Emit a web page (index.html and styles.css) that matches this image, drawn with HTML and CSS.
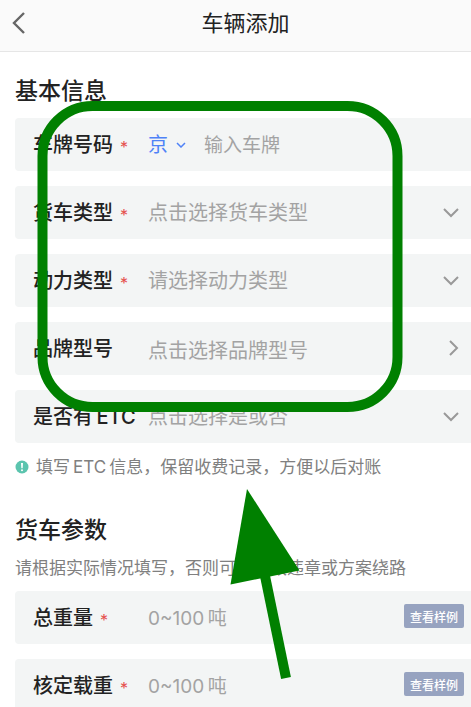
FILE: index.html
```html
<!DOCTYPE html>
<html lang="zh-CN">
<head>
  <meta charset="UTF-8">
  <title>车辆添加</title>
  <meta name="viewport" content="width=device-width, initial-scale=1.0">
  <link rel="stylesheet" href="styles.css">
</head>
<body>
  <header class="navbar">
    <button type="button" class="back" aria-label="返回">
      <svg width="14" height="24" viewBox="0 0 14 24"><path d="M12 2 L2 12 L12 22"/></svg>
    </button>
    <h1>车辆添加</h1>
  </header>

  <form class="content">
    <section>
      <h2>基本信息</h2>
      <div class="rows">
        <div class="row">
          <label for="plate">车牌号码<span class="required">*</span></label>
          <div class="province">
            <select id="province" aria-label="省份">
              <option>京</option>
            </select>
            <svg width="10" height="6" viewBox="0 0 10 6"><path d="M1 1 L5 5 L9 1"/></svg>
          </div>
          <input type="text" id="plate" placeholder="输入车牌">
        </div>
        <div class="row">
          <label for="truck-type">货车类型<span class="required">*</span></label>
          <select id="truck-type">
            <option value="">点击选择货车类型</option>
          </select>
          <svg class="arrow" width="16" height="16" viewBox="0 0 16 16"><path d="M1 5 L8 12 L15 5"/></svg>
        </div>
        <div class="row">
          <label for="power-type">动力类型<span class="required">*</span></label>
          <select id="power-type">
            <option value="">请选择动力类型</option>
          </select>
          <svg class="arrow" width="16" height="16" viewBox="0 0 16 16"><path d="M1 5 L8 12 L15 5"/></svg>
        </div>
        <div class="row">
          <label for="model">品牌型号</label>
          <button type="button" class="picker" id="model">点击选择品牌型号</button>
          <svg class="arrow" width="16" height="16" viewBox="0 0 16 16"><path d="M7 1 L14 8 L7 15"/></svg>
        </div>
        <div class="row">
          <label for="etc">是否有&thinsp;ETC</label>
          <select id="etc">
            <option value="">点击选择是或否</option>
          </select>
          <svg class="arrow" width="16" height="16" viewBox="0 0 16 16"><path d="M1 5 L8 12 L15 5"/></svg>
        </div>
      </div>
      <p class="tip">
        <svg width="14" height="14" viewBox="0 0 14 14">
          <circle cx="7" cy="7" r="6.5" fill="#5bc4ae"/>
          <path d="M6 3 H8 L7.7 8.2 H6.3 Z" fill="#fff"/>
          <circle cx="7" cy="10.2" r="1" fill="#fff"/>
        </svg>
        填写&thinsp;ETC&thinsp;信息，保留收费记录，方便以后对账
      </p>
    </section>

    <section>
      <h2>货车参数</h2>
      <p class="desc">请根据实际情况填写，否则可能导致违章或方案绕路</p>
      <div class="rows">
        <div class="row">
          <label for="total-weight">总重量<span class="required">*</span></label>
          <input type="text" id="total-weight" placeholder="0~100&thinsp;吨">
          <button type="button" class="sample">查看样例</button>
        </div>
        <div class="row">
          <label for="load-weight">核定载重<span class="required">*</span></label>
          <input type="text" id="load-weight" placeholder="0~100&thinsp;吨">
          <button type="button" class="sample">查看样例</button>
        </div>
      </div>
    </section>
  </form>

  <!-- highlight frame and arrow over the basic info fields -->
  <svg class="marker" width="471" height="707" viewBox="0 0 471 707" aria-hidden="true">
    <rect x="42.5" y="106" width="355" height="301" rx="50" fill="none" stroke="#008000" stroke-width="10"/>
    <path d="M265 576 L286 678" stroke="#008000" stroke-width="10"/>
    <path d="M247 489 L299.500 570.500 L230.500 584.500 Z" fill="#008000"/>
  </svg>
</body>
</html>
```

FILE: styles.css
```css
:root {
  --text: #222;
  --placeholder: #a3a3a3;
  --muted: #808080;
  --row-bg: #f3f5f5;
  --blue: #4f82f7;
  --red: #e5504d;
}

* {
  box-sizing: border-box;
}

html, body {
  margin: 0;
  height: 100%;
}

body {
  position: relative;
  overflow: hidden;
  background: #fff;
  color: var(--text);
  font-family: Inter, "Noto Sans CJK SC", sans-serif;
}

h1, h2, p {
  margin: 0;
}

svg {
  flex: none;
  fill: none;
}

button, input, select {
  margin: 0;
  padding: 0;
  border: 0;
  background: none;
  font: inherit;
  color: inherit;
  outline: none;
  appearance: none;
}

.navbar {
  display: flex;
  align-items: center;
  height: 52px;
  padding: 0 12px;
  padding-bottom: 5px;
  background: #fafafa;
  border-bottom: 1px solid #e6e6e6;
}

.back {
  display: flex;
  width: 20px;
  stroke: #666;
  stroke-width: 2.4;
}

.navbar h1 {
  flex: 1;
  font-size: 22px;
  font-weight: 400;
  line-height: 32px;
  text-align: center;
}

.content {
  padding: 23px 0 0 15px;
}

section + section {
  margin-top: 35px;
}

h2 {
  font-size: 23px;
  font-weight: 500;
  line-height: 32px;
}

.rows {
  display: grid;
  grid-template-columns: minmax(0, 1fr);
  gap: 15px;
  margin-top: 11px;
}

.row {
  display: flex;
  align-items: center;
  height: 53px;
  padding: 1px 7px 0 18px;
  background: var(--row-bg);
  border-radius: 4px 0 0 4px;
  font-size: 20px;
}

.row label {
  display: flex;
  align-items: center;
  flex: none;
  width: 115px;
  font-weight: 500;
  line-height: 28px;
  white-space: nowrap;
}

.required {
  margin-left: 7px;
  padding-top: 4px;
  color: var(--red);
  font-size: 16px;
  font-weight: 400;
}

.row input,
.row > select,
.picker {
  flex: 1;
  min-width: 0;
  height: 100%;
  color: var(--placeholder);
  text-align: left;
}

.row input {
  font-size: 19px;
}

.row input::placeholder {
  color: var(--placeholder);
}

.province {
  display: flex;
  align-items: center;
  gap: 8px;
  width: 56px;
  color: var(--blue);
  stroke: var(--blue);
  stroke-width: 1.5;
}

.arrow {
  margin-right: 5px;
  margin-bottom: 2px;
  stroke: #999;
  stroke-width: 2;
}

.row .sample {
  flex: none;
  height: 24px;
  margin-bottom: 4px;
  padding: 0 6px;
  border-radius: 2px;
  background: #97a3c0;
  color: #fff;
  font-size: 12px;
  font-weight: 500;
}

.tip,
.desc {
  color: var(--muted);
  font-size: 17px;
  line-height: 24px;
  white-space: nowrap;
}

.tip {
  display: flex;
  align-items: center;
  gap: 7px;
  margin-top: 12px;
}

.desc {
  margin-top: 10px;
}

.marker {
  position: absolute;
  top: 0;
  left: 0;
  pointer-events: none;
}
```
